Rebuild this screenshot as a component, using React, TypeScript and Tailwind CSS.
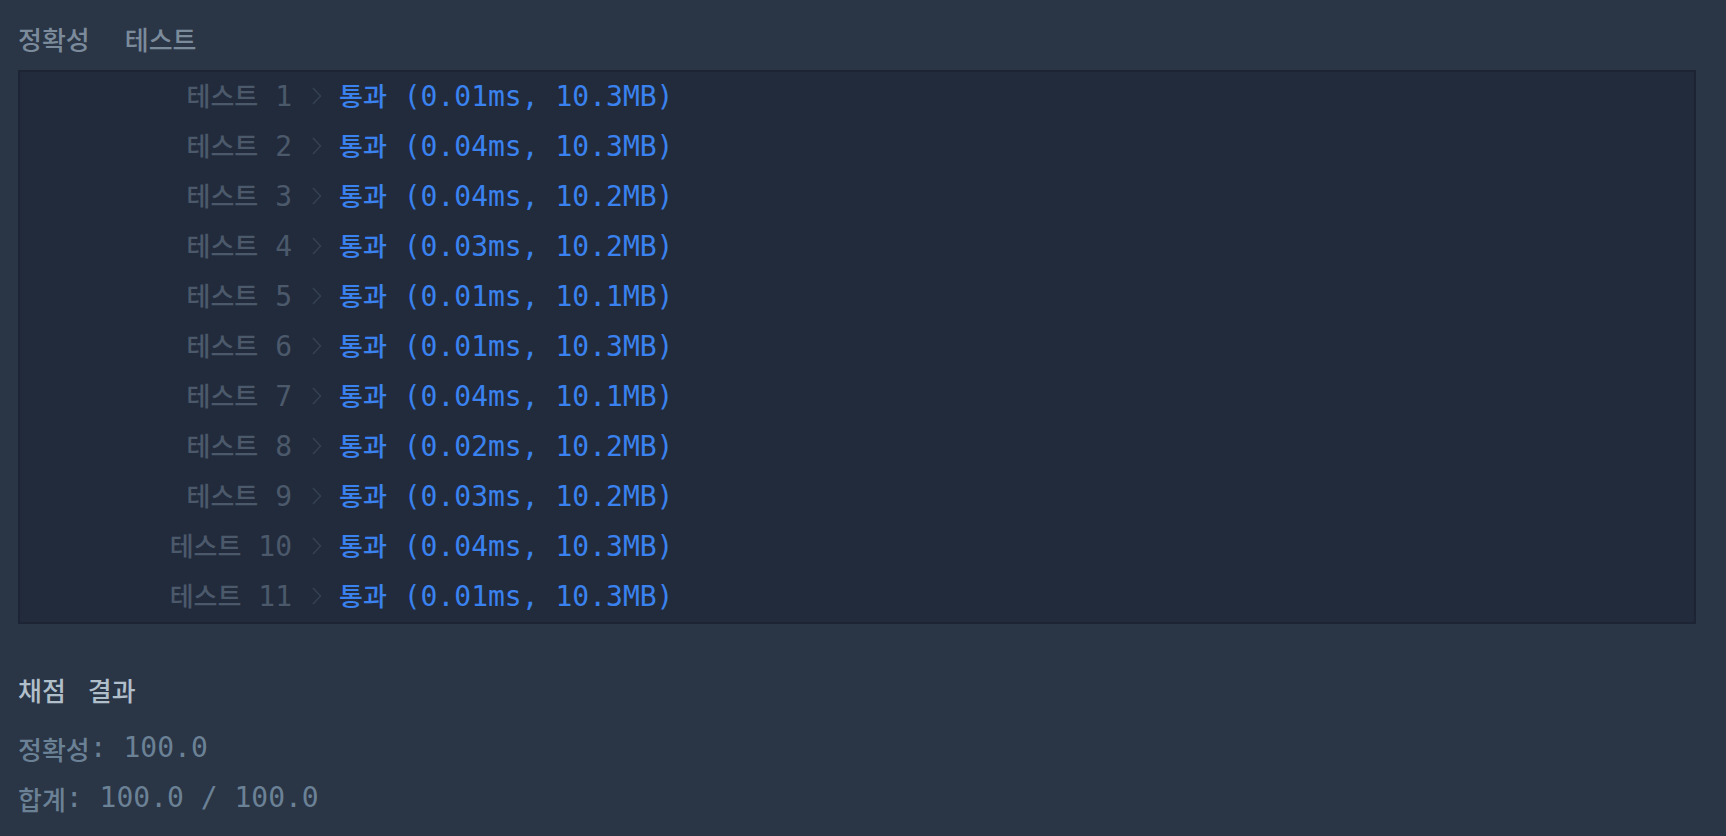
const results = [
  { no: 1, ms: "0.01", mb: "10.3" },
  { no: 2, ms: "0.04", mb: "10.3" },
  { no: 3, ms: "0.04", mb: "10.2" },
  { no: 4, ms: "0.03", mb: "10.2" },
  { no: 5, ms: "0.01", mb: "10.1" },
  { no: 6, ms: "0.01", mb: "10.3" },
  { no: 7, ms: "0.04", mb: "10.1" },
  { no: 8, ms: "0.02", mb: "10.2" },
  { no: 9, ms: "0.03", mb: "10.2" },
  { no: 10, ms: "0.04", mb: "10.3" },
  { no: 11, ms: "0.01", mb: "10.3" }
];

const mono = "font-['DejaVu_Sans_Mono','Noto_Sans_CJK_KR',monospace]";
const kr = "font-['Noto_Sans_CJK_KR',sans-serif] text-[26px] font-medium";

const Chevron = () => (
  <svg width="12" height="18" viewBox="0 0 12 18" className="ml-[19px] mr-[16px] shrink-0">
    <polyline points="2,1 9.5,9 2,17" fill="none" stroke="#364254" strokeWidth="1.4" />
  </svg>
);

export default function App() {
  return (
    <div className={`min-h-[836px] w-full bg-[#2a3546] ${mono} text-[28px]`}>
      <div className="pl-[18px] pr-[30px] pt-[18px]">
        <div className={`flex h-[40px] items-center gap-[35px] ${kr} text-[#7b8b9b]`}>
          <span>정확성</span>
          <span>테스트</span>
        </div>

        <div className="mt-[12px] border-2 border-[#1d2534] bg-[#222b3c]">
          {results.map((r) => (
            <div key={r.no} className="flex h-[50px] items-center pb-[2px]">
              <div className="w-[272px] shrink-0 text-right text-[#4b596b]">
                <span className={kr}>테스트</span> {r.no}
              </div>
              <Chevron />
              <div className="whitespace-pre text-[#3a82ef]">
                <span className={kr}>통과</span> ({r.ms}ms, {r.mb}MB)
              </div>
            </div>
          ))}
        </div>

        <div className={`mt-[40px] flex h-[50px] items-center gap-[22px] ${kr} text-[#b1bfcb]`}>
          <span>채점</span>
          <span>결과</span>
        </div>
        <div className="mt-[9px] flex h-[50px] items-center whitespace-pre text-[#6b8195]">
          <span className={kr}>정확성</span>: 100.0
        </div>
        <div className="flex h-[50px] items-center whitespace-pre text-[#6b8195]">
          <span className={kr}>합계</span>: 100.0 / 100.0
        </div>
      </div>
    </div>
  );
}
